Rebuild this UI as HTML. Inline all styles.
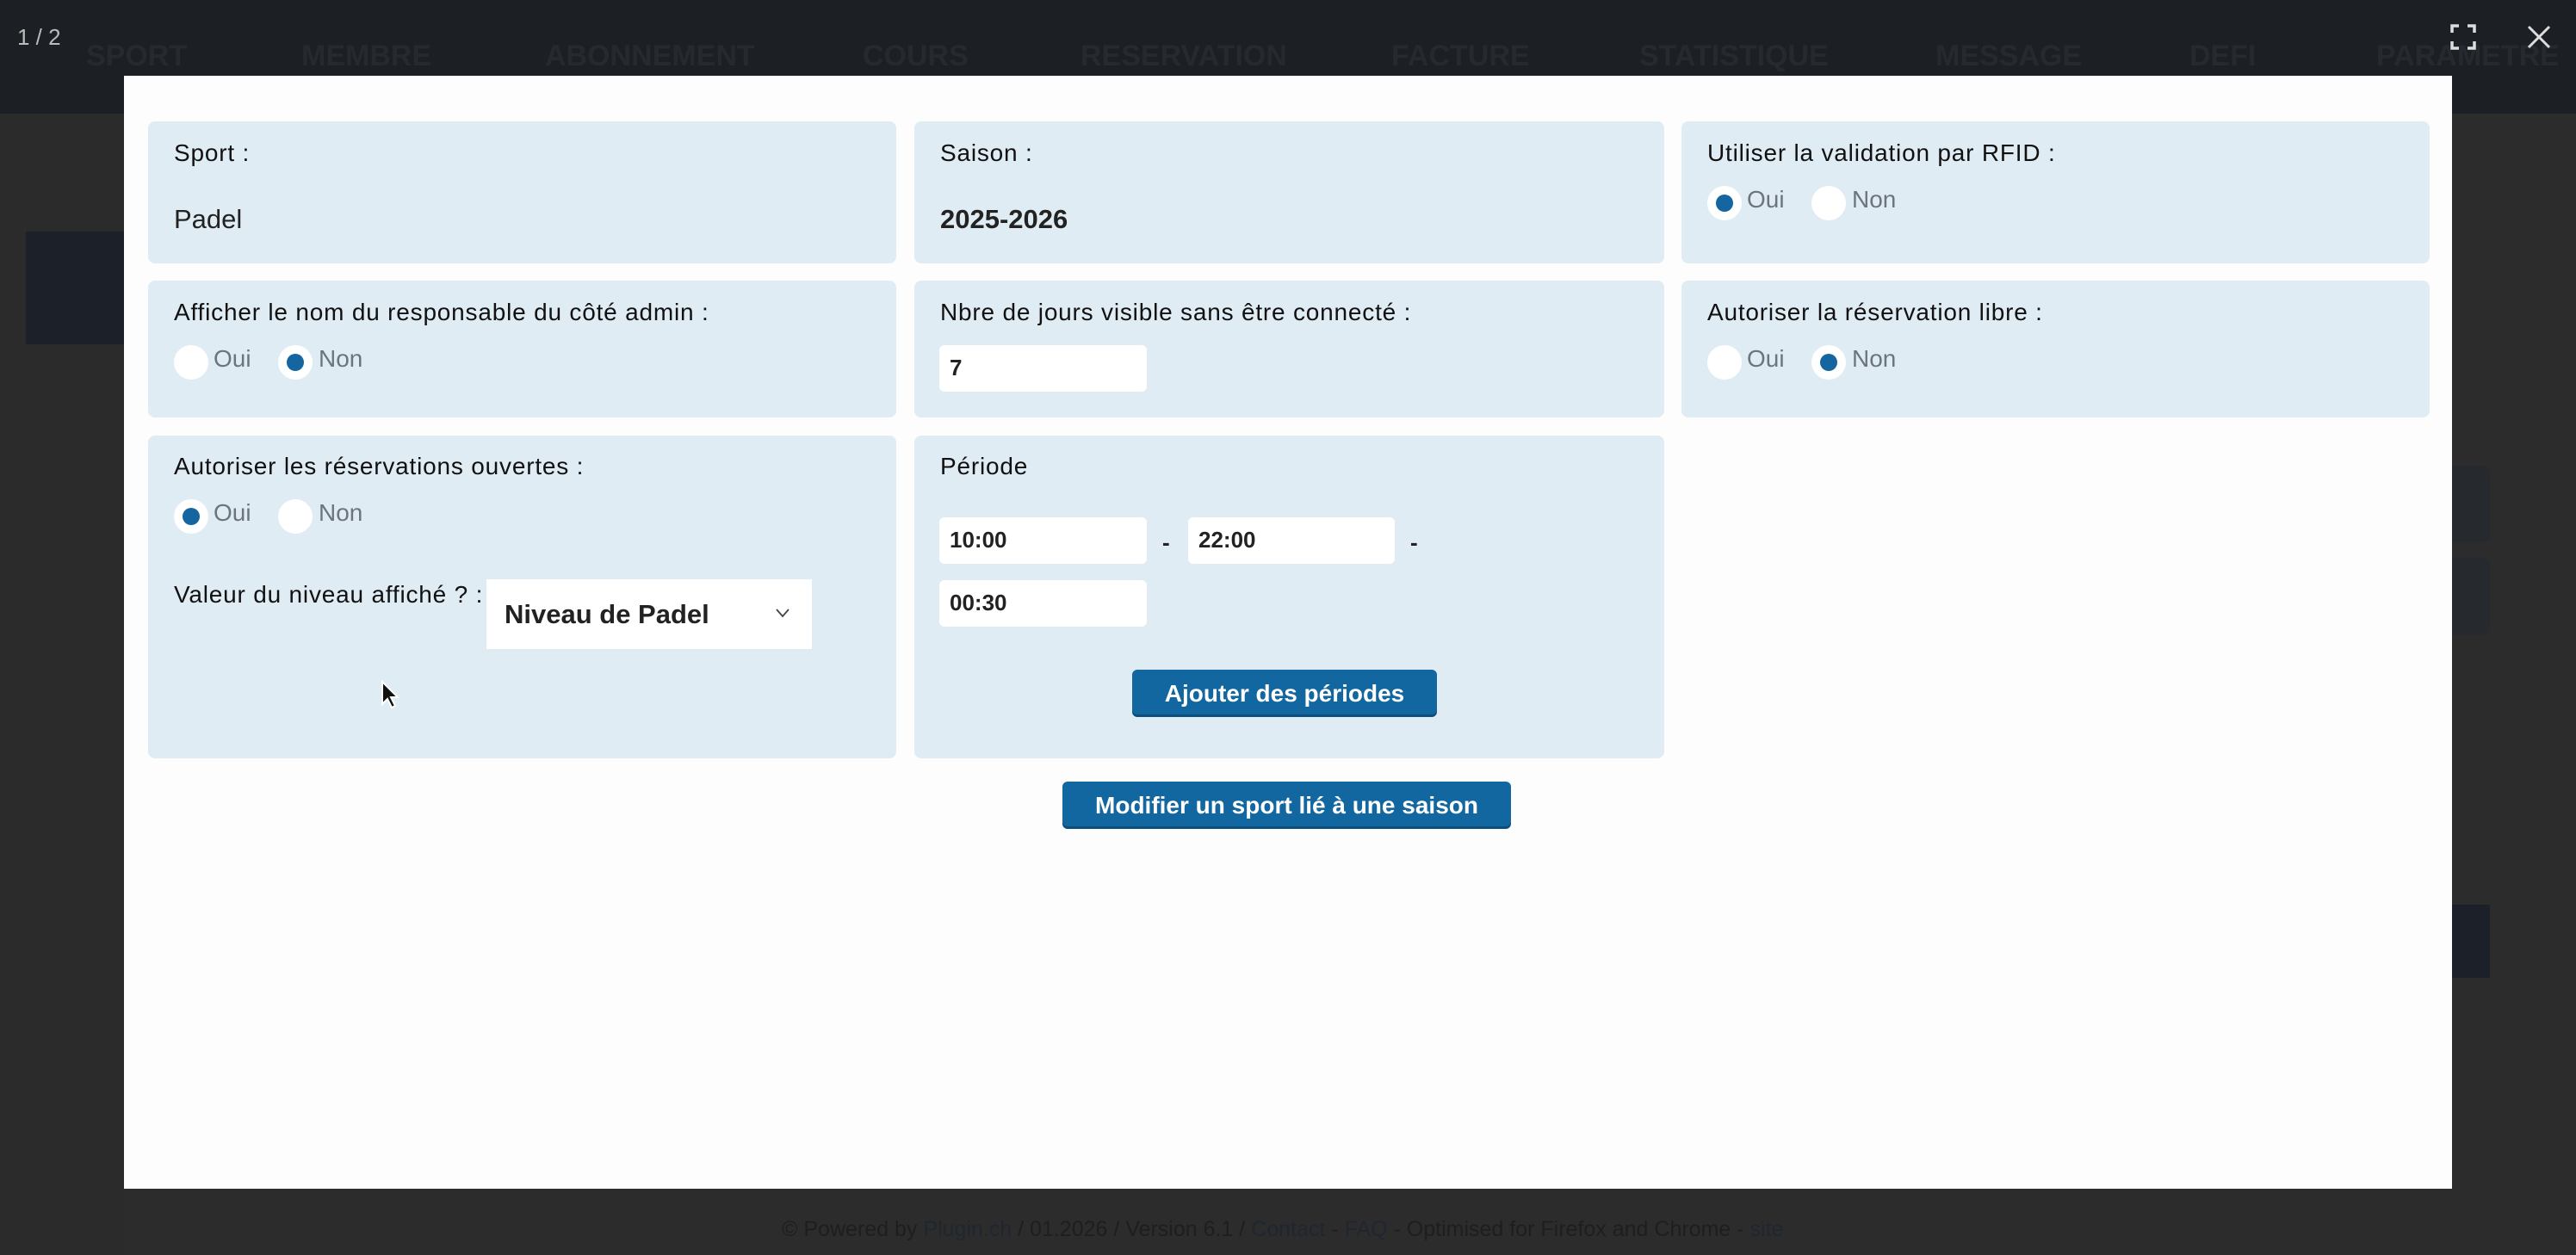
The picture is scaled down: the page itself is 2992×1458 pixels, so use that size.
<!DOCTYPE html>
<html><head><meta charset="utf-8"><style>
*{box-sizing:border-box;margin:0;padding:0}
body{width:2992px;height:1458px;overflow:hidden;background:#2c2c2c;font-family:"Liberation Sans",sans-serif;position:relative}
.a{position:absolute}
.top{left:0;top:0;width:2992px;height:132px;background:#1c1f24}
.nav{top:46px;font-size:34px;font-weight:bold;color:#262a2f;white-space:nowrap}
.modal{left:144px;top:88px;width:2704px;height:1293px;background:#fdfdfd}
.p{background:#e0ecf4;border-radius:8px}
.l{font-size:28px;letter-spacing:0.8px;color:#111;white-space:nowrap}
.v{font-size:31px;color:#222;white-space:nowrap}
.r{width:40px;height:40px;border-radius:50%;background:#fff}
.r.on::after{content:"";position:absolute;left:10px;top:10px;width:20px;height:20px;border-radius:50%;background:#1565a0}
.rt{font-size:28px;color:#6c757d}
.in{background:#fff;border-radius:6px;font-size:26px;font-weight:bold;color:#222;padding-left:12px;line-height:53px}
.btn{background:#1367a0;border-radius:6px;color:#fff;font-weight:bold;font-size:28px;text-align:center;box-shadow:0 3px 0 #0d4f7c}
</style></head><body>
<div class="a top"></div>
<div class="a" style="left:0;top:132px;width:144px;height:1326px;background:#2b2b2b"></div>
<div class="a" style="left:30px;top:269px;width:114px;height:131px;background:#1c2028"></div>
<div class="a" style="left:2848px;top:541px;width:44px;height:89px;background:#262a2e;border-radius:0 8px 8px 0"></div>
<div class="a" style="left:2848px;top:648px;width:44px;height:90px;background:#262a2e;border-radius:0 8px 8px 0"></div>
<div class="a" style="left:2848px;top:1051px;width:44px;height:85px;background:#1c2028"></div>
<div class="a nav" style="left:100px">SPORT</div>
<div class="a nav" style="left:350px">MEMBRE</div>
<div class="a nav" style="left:633px">ABONNEMENT</div>
<div class="a nav" style="left:1002px">COURS</div>
<div class="a nav" style="left:1255px">RESERVATION</div>
<div class="a nav" style="left:1616px">FACTURE</div>
<div class="a nav" style="left:1904px">STATISTIQUE</div>
<div class="a nav" style="left:2248px">MESSAGE</div>
<div class="a nav" style="left:2543px">DEFI</div>
<div class="a nav" style="left:2760px">PARAMETRE</div>
<div class="a" style="left:20px;top:28px;font-size:26px;color:#bbb">1 / 2</div>
<svg class="a" style="left:2846px;top:28px" width="30" height="30" viewBox="0 0 30 30" fill="none" stroke="#ddd" stroke-width="3.5"><path d="M2 10V2h8M20 2h8v8M28 20v8h-8M10 28H2v-8"/></svg>
<svg class="a" style="left:2934px;top:28px" width="30" height="30" viewBox="0 0 30 30" stroke="#ddd" stroke-width="3"><path d="M3 3L27 27M27 3L3 27"/></svg>
<div class="a" style="left:908px;top:1414px;font-size:25px;color:#1e1e1e;white-space:nowrap">© Powered by <span style="color:#1f2630">Plugin.ch</span> / 01.2026 / Version 6.1 / <span style="color:#1f2630">Contact</span> - <span style="color:#1f2630">FAQ</span> - Optimised for Firefox and Chrome - <span style="color:#1f2630">site</span></div>

<div class="a modal"></div>
<div class="a p" style="left:172px;top:141px;width:869px;height:165px"></div>
<div class="a l" style="left:202px;top:162px">Sport :</div>
<div class="a v" style="left:202px;top:237px">Padel</div>
<div class="a p" style="left:1062px;top:141px;width:871px;height:165px"></div>
<div class="a l" style="left:1092px;top:162px">Saison :</div>
<div class="a v" style="left:1092px;top:237px;font-weight:bold">2025-2026</div>
<div class="a p" style="left:1953px;top:141px;width:869px;height:165px"></div>
<div class="a l" style="left:1983px;top:162px">Utiliser la validation par RFID :</div>
<div class="a r on" style="left:1983px;top:216px"></div><div class="a rt" style="left:2029px;top:216px">Oui</div>
<div class="a r" style="left:2104px;top:216px"></div><div class="a rt" style="left:2151px;top:216px">Non</div>

<div class="a p" style="left:172px;top:326px;width:869px;height:159px"></div>
<div class="a l" style="left:202px;top:347px">Afficher le nom du responsable du côté admin :</div>
<div class="a r" style="left:202px;top:401px"></div><div class="a rt" style="left:248px;top:401px">Oui</div>
<div class="a r on" style="left:323px;top:401px"></div><div class="a rt" style="left:370px;top:401px">Non</div>
<div class="a p" style="left:1062px;top:326px;width:871px;height:159px"></div>
<div class="a l" style="left:1092px;top:347px">Nbre de jours visible sans être connecté :</div>
<div class="a in" style="left:1091px;top:401px;width:241px;height:54px">7</div>
<div class="a p" style="left:1953px;top:326px;width:869px;height:159px"></div>
<div class="a l" style="left:1983px;top:347px">Autoriser la réservation libre :</div>
<div class="a r" style="left:1983px;top:401px"></div><div class="a rt" style="left:2029px;top:401px">Oui</div>
<div class="a r on" style="left:2104px;top:401px"></div><div class="a rt" style="left:2151px;top:401px">Non</div>

<div class="a p" style="left:172px;top:506px;width:869px;height:375px"></div>
<div class="a l" style="left:202px;top:526px">Autoriser les réservations ouvertes :</div>
<div class="a r on" style="left:202px;top:580px"></div><div class="a rt" style="left:248px;top:580px">Oui</div>
<div class="a r" style="left:323px;top:580px"></div><div class="a rt" style="left:370px;top:580px">Non</div>
<div class="a l" style="left:202px;top:675px">Valeur du niveau affiché ? :</div>
<div class="a" style="left:565px;top:673px;width:378px;height:81px;background:#fff"></div>
<div class="a" style="left:586px;top:696px;font-size:31px;font-weight:bold;color:#222">Niveau de Padel</div>
<svg class="a" style="left:900px;top:706px" width="18" height="12" viewBox="0 0 18 12" fill="none" stroke="#444" stroke-width="1.8"><path d="M2 2l7 8 7-8"/></svg>
<svg class="a" style="left:442px;top:790px" width="22" height="34" viewBox="0 0 22 34"><path d="M2 2v26l6-6 5 10 4-2-5-10h8z" fill="#111" stroke="#fff" stroke-width="2"/></svg>
<div class="a p" style="left:1062px;top:506px;width:871px;height:375px"></div>
<div class="a l" style="left:1092px;top:526px">Période</div>
<div class="a in" style="left:1091px;top:601px;width:241px;height:54px">10:00</div>
<div class="a" style="left:1350px;top:615px;font-size:26px;font-weight:bold;color:#222">-</div>
<div class="a in" style="left:1380px;top:601px;width:240px;height:54px">22:00</div>
<div class="a" style="left:1638px;top:615px;font-size:26px;font-weight:bold;color:#222">-</div>
<div class="a in" style="left:1091px;top:674px;width:241px;height:54px">00:30</div>
<div class="a btn" style="left:1315px;top:778px;width:354px;height:52px;line-height:56px">Ajouter des périodes</div>
<div class="a btn" style="left:1234px;top:908px;width:521px;height:52px;line-height:56px">Modifier un sport lié à une saison</div>
</body></html>
